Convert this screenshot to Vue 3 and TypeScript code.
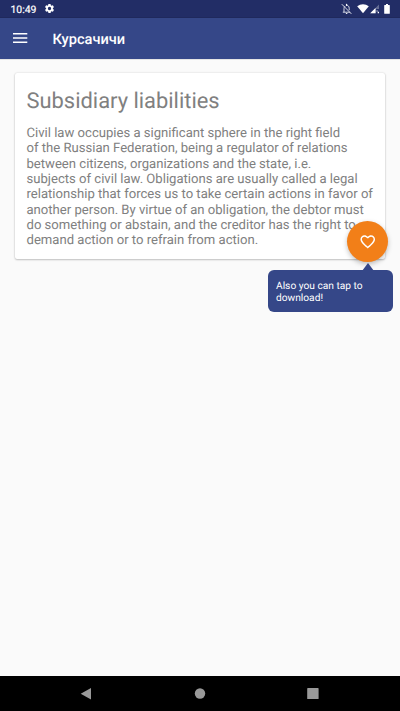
<script setup lang="ts">
const title: string = 'Subsidiary liabilities'
const lines: string[] = [
  'Civil law occupies a significant sphere in the right field',
  'of the Russian Federation, being a regulator of relations',
  'between citizens, organizations and the state, i.e.',
  'subjects of civil law. Obligations are usually called a legal',
  'relationship that forces us to take certain actions in favor of',
  'another person. By virtue of an obligation, the debtor must',
  'do something or abstain, and the creditor has the right to',
  'demand action or to refrain from action.',
]
const hint: string[] = ['Also you can tap to', 'download!']
</script>

<template>
  <div class="screen">
    <div class="status">
      <span class="time">10:49</span>
      <svg class="gear" viewBox="0 0 24 24"><path fill-rule="evenodd" d="M19.4 13a7.5 7.5 0 0 0 0-2l2.1-1.6a.5.5 0 0 0 .1-.7l-2-3.4a.5.5 0 0 0-.6-.2l-2.5 1a7.3 7.3 0 0 0-1.7-1L14.4 2.4A.5.5 0 0 0 14 2h-4a.5.5 0 0 0-.5.4l-.4 2.7a7.3 7.3 0 0 0-1.7 1l-2.5-1a.5.5 0 0 0-.6.2l-2 3.4a.5.5 0 0 0 .1.7L4.6 11a7.5 7.5 0 0 0 0 2l-2.1 1.6a.5.5 0 0 0-.1.7l2 3.4c.1.2.4.3.6.2l2.5-1a7.3 7.3 0 0 0 1.7 1l.4 2.7c0 .2.2.4.5.4h4c.2 0 .4-.2.4-.4l.4-2.7a7.3 7.3 0 0 0 1.7-1l2.5 1c.2.1.5 0 .6-.2l2-3.4a.5.5 0 0 0-.1-.7zM12 15.6a3.6 3.6 0 1 1 0-7.2 3.6 3.6 0 0 1 0 7.2z" /></svg>
      <span class="grow"></span>
      <svg class="bell" viewBox="0 0 12 12">
        <path class="line" d="M1.8 9.2h7.4M3 9V5.6c0-1.1.3-1.9 1-2.4M5 2.5c1.8-.5 3.2.7 3.2 2.7v2M.8 1.2l9.6 9.7" />
        <path d="M4.7 10h1.8a.9.9 0 0 1-1.8 0zM4.9 1.5a.7.7 0 0 1 1.4 0v1H4.9z" />
      </svg>
      <svg class="wifi" viewBox="0 0 12 10"><path d="M.2 2.3a9.5 9.5 0 0 1 11.6 0L6 9.2z" /></svg>
      <svg class="signal" viewBox="0 0 10 10">
        <path class="dim" d="M9 .4V5H6v4.2H.2z" />
        <path d="M5.500 3.900v5.300H.2zM6.500 6.400h1.100v1.100H6.500zM7.700 7.700H9v1.500H7.700z" />
      </svg>
      <svg class="battery" viewBox="0 0 6 10"><path d="M2 0h2v1h1.3q.5 0 .5.6v7.600q0 .6-.6.6H.8q-.6 0-.6-.6V1.6Q.2 1 .7 1H2z" /></svg>
    </div>
    <header class="bar">
      <svg class="menu" viewBox="0 0 15 10"><path d="M0 0h14.3v1.5H0zM0 4.2h14.3v1.5H0zM0 8.4h14.3v1.5H0z" /></svg>
      <span class="app-name">Курсачичи</span>
    </header>
    <main class="content">
      <article class="card">
        <h1>{{ title }}</h1>
        <p><span v-for="line in lines" :key="line">{{ line }}</span></p>
        <button class="fab" aria-label="Favorite">
          <svg viewBox="0 0 24 24"><path d="M16.5 3c-1.74 0-3.41.81-4.5 2.09C10.91 3.81 9.24 3 7.5 3 4.42 3 2 5.42 2 8.5c0 3.78 3.4 6.86 8.55 11.54L12 21.35l1.45-1.32C18.6 15.36 22 12.28 22 8.5 22 5.42 19.58 3 16.5 3zm-4.4 15.55l-.1.1-.1-.1C7.14 14.24 4 11.39 4 8.5 4 6.5 5.5 5 7.5 5c1.54 0 3.04.99 3.57 2.36h1.87C13.46 5.99 14.96 5 16.5 5c2 0 3.5 1.5 3.5 3.5 0 2.89-3.14 5.74-7.9 10.05z" /></svg>
        </button>
        <div class="tooltip">
          <svg class="tip" viewBox="0 0 12 8"><path d="M6 0l6 8H0z" /></svg>
          <span v-for="line in hint" :key="line">{{ line }}</span>
        </div>
      </article>
    </main>
    <nav class="nav">
      <svg viewBox="0 0 12 12"><path d="M.7 5.7 11 0v11.4z" /></svg>
      <svg viewBox="0 0 12 12"><circle cx="6" cy="5.5" r="5.2" /></svg>
      <svg viewBox="0 0 12 12"><rect x=".2" y=".1" width="11.4" height="11" rx=".6" /></svg>
    </nav>
  </div>
</template>

<style>
body {
  margin: 0;
}
</style>

<style scoped>
.screen {
  width: 400px;
  height: 711px;
  display: flex;
  flex-direction: column;
  overflow: hidden;
  background: #fafafa;
  font-family: Roboto, sans-serif;
  text-rendering: geometricPrecision;
}
svg {
  display: block;
  fill: #fff;
  flex: none;
}
.status {
  height: 17.5px;
  box-sizing: border-box;
  display: flex;
  align-items: center;
  padding: 0 10.5px;
  background: #222d66;
  color: #fff;
}
.time {
  width: 26px;
  font-size: 10.4px;
  font-weight: 400;
  -webkit-text-stroke: 0.2px #fff;
  line-height: 13px;
  padding-top: 1px;
  white-space: nowrap;
}
.gear {
  width: 11px;
  height: 11px;
  margin-left: 7.5px;
}
.grow {
  flex: 1;
}
.bell {
  width: 12px;
  height: 12px;
}
.line {
  fill: none;
  stroke: #d5d8e5;
  stroke-width: 1;
}
.wifi {
  width: 12px;
  height: 10px;
  margin-left: 3.5px;
}
.signal {
  width: 10px;
  height: 10px;
  margin-left: 1px;
}
.dim {
  opacity: 0.3;
}
.battery {
  width: 6px;
  height: 10px;
  margin-left: 4.5px;
  margin-right: -0.5px;
}
.bar {
  height: 41px;
  display: flex;
  align-items: center;
  background: #354788;
  box-shadow: 0 0 1px rgba(0, 0, 0, 0.5);
}
.menu {
  width: 15px;
  height: 10px;
  margin-left: 13px;
}
.app-name {
  margin-left: 24.5px;
  padding-top: 1px;
  font-size: 14.6px;
  font-weight: 500;
  color: #fff;
}
.content {
  flex: 1;
  padding: 14.5px 15px 0;
}
.card {
  position: relative;
  box-sizing: border-box;
  height: 186px;
  padding: 15px 11.5px 0;
  border-radius: 2px;
  background: #fff;
  box-shadow: 0 1px 2px rgba(0, 0, 0, 0.2), 0 0 2px rgba(0, 0, 0, 0.16);
  color: #808080;
}
h1 {
  margin: 0 0 10px;
  font-size: 21.9px;
  font-weight: 400;
  line-height: 28px;
  white-space: nowrap;
}
p {
  margin: 0;
  font-size: 13.1px;
  line-height: 15.35px;
}
p span,
.tooltip span {
  display: block;
  white-space: nowrap;
}
.fab {
  position: absolute;
  right: -3px;
  top: 148px;
  width: 41px;
  height: 41px;
  padding: 0;
  border: 0;
  border-radius: 50%;
  display: grid;
  place-items: center;
  background: #f27f18;
  box-shadow: 0 2px 5px rgba(0, 0, 0, 0.25);
}
.fab svg {
  width: 17.5px;
  height: 17.5px;
}
.tooltip {
  position: absolute;
  right: -8px;
  top: 197px;
  width: 125px;
  height: 42px;
  box-sizing: border-box;
  padding: 11px 8px 0;
  border-radius: 6px;
  background: #354788;
  color: #fff;
  font-size: 10.2px;
  line-height: 12px;
}
.tip {
  position: absolute;
  left: 93.5px;
  top: -7px;
  width: 12px;
  height: 8px;
  fill: #354788;
}
.nav {
  height: 35px;
  box-sizing: border-box;
  display: flex;
  justify-content: space-between;
  align-items: center;
  padding: 0 81px 0 80px;
  background: #000;
}
.nav svg {
  width: 12px;
  height: 12px;
  fill: #999;
}
</style>
